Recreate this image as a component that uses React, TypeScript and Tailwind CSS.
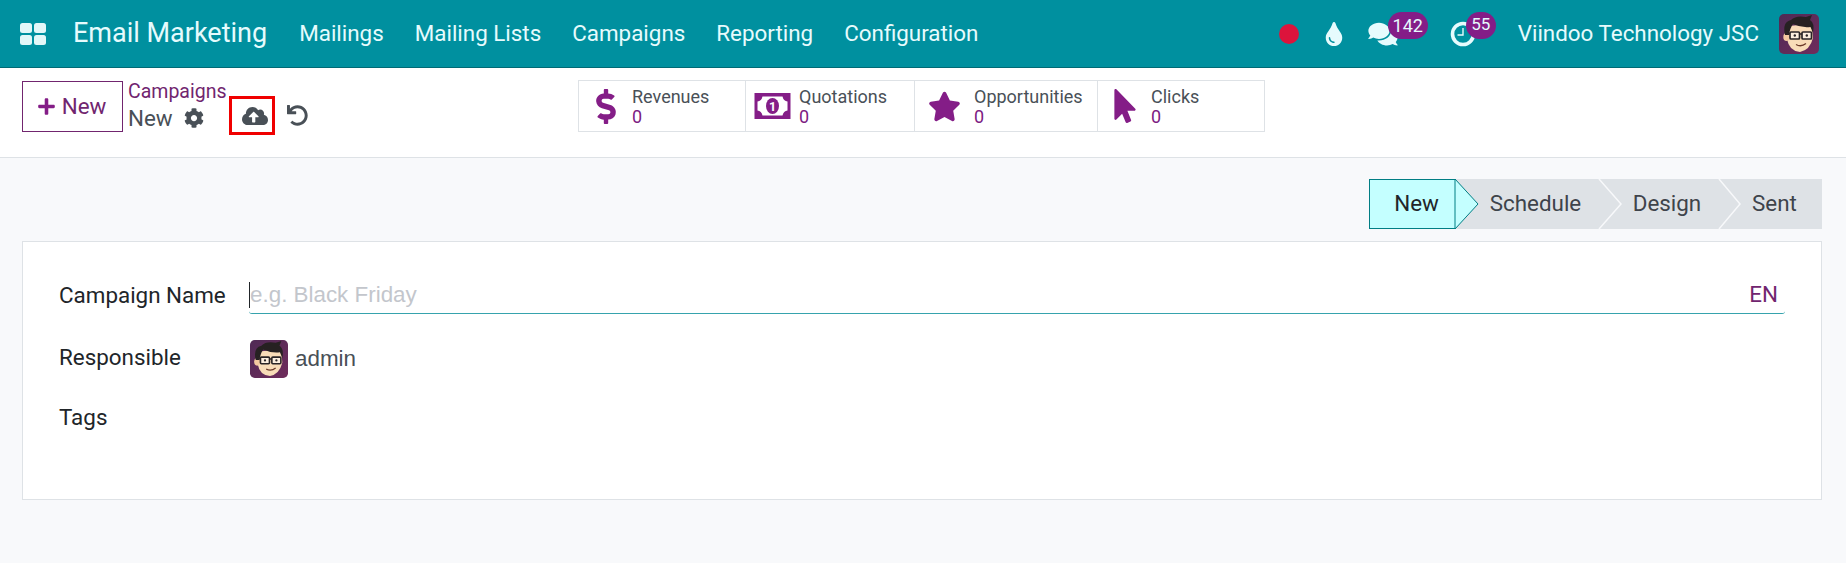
import React from "react";
import { FaDollarSign, FaStar, FaMousePointer, FaCog, FaCloudUploadAlt, FaUndo, FaPlus, FaTint, FaComments } from "react-icons/fa";

function Avatar({ className }: { className: string }) {
  return (
    <svg viewBox="0 0 40 40" className={className}>
      <defs>
        <clipPath id="av"><rect width="40" height="40" rx="5" /></clipPath>
        <linearGradient id="avbg" x1="0" y1="0" x2="1" y2="1">
          <stop offset="0" stopColor="#4f2a55" />
          <stop offset="1" stopColor="#6f2c5c" />
        </linearGradient>
      </defs>
      <g clipPath="url(#av)">
        <rect width="40" height="40" fill="url(#avbg)" />
        <path d="M8 20 L8 25 Q10 37 21 38 Q31 36 34 24 L33 10 L9 12 Z" fill="#f8dcb8" />
        <ellipse cx="7.5" cy="23" rx="3.2" ry="4" fill="#f3c9a0" />
        <path d="M6 21 Q3 8 12 6 Q17 1 27 3 L33 1 L31 6 Q36 9 34 19 L31.5 13 Q22 14 14 10 Q11 14 10 21 Z" fill="#262122" />
        <rect x="11" y="18" width="9.5" height="7" rx="1" fill="#fff" fillOpacity="0.55" stroke="#2a2526" strokeWidth="1.7" />
        <rect x="23" y="18" width="9.5" height="7" rx="1" fill="#fff" fillOpacity="0.55" stroke="#2a2526" strokeWidth="1.7" />
        <path d="M20.5 20 H23 M8 19.5 H11" stroke="#2a2526" strokeWidth="1.4" />
        <circle cx="15.8" cy="21.5" r="1.2" fill="#2a2526" />
        <circle cx="27.8" cy="21.5" r="1.2" fill="#2a2526" />
        <path d="M17 30.5 Q22 33.5 27 29.5" stroke="#6b3a2a" strokeWidth="1.3" fill="none" />
      </g>
    </svg>
  );
}

function MoneyIcon() {
  return (
    <svg viewBox="0 0 36 26" className="h-[26px] w-[37px]">
      <rect width="36" height="26" fill="#841d87" />
      <path d="M8 3.5 H28 Q29 8 33 8.5 V17.5 Q29 18 28 22.5 H8 Q7 18 3 17.5 V8.5 Q7 8 8 3.5 Z" fill="#fff" />
      <ellipse cx="18" cy="13" rx="6.5" ry="8" fill="#841d87" />
      <text x="18" y="17.5" textAnchor="middle" fontSize="12.5" fontWeight="700" fill="#fff" fontFamily="Roboto, sans-serif">1</text>
    </svg>
  );
}

function ClockIcon() {
  return (
    <svg viewBox="0 0 26 26" className="h-[26px] w-[26px]" fill="none" stroke="#e6fbfd">
      <circle cx="13" cy="13" r="10.5" strokeWidth="3.6" />
      <path d="M13 7 V14 H7.5" strokeWidth="1.4" />
    </svg>
  );
}

function Stat({ icon, label, width, iconBox }: { icon: React.ReactNode; label: string; width: string; iconBox: string }) {
  return (
    <div className={`flex h-full items-center border-r border-[#dee2e6] last:border-r-0 ${width}`}>
      <div className={`flex items-center justify-center ${iconBox}`}>{icon}</div>
      <div className="flex flex-col pt-[2px] text-[18px] leading-[20px]">
        <span className="text-[#495057]">{label}</span>
        <span className="text-[#7c2082]">0</span>
      </div>
    </div>
  );
}

function Step({ label, width, active, pad }: { label: string; width: string; active?: boolean; pad: string }) {
  return (
    <div className={`flex h-full items-center justify-center text-[22.4px] ${width} ${active ? "bg-[#c4ffff] border border-[#017e84] text-[#212529]" : "bg-[#dee2e6] text-[#3e444b]"}`}>
      <span className={pad}>{label}</span>
    </div>
  );
}

export default function App() {
  return (
    <div className="flex h-[563px] w-[1846px] flex-col overflow-hidden bg-[#f8f9fb] font-['Roboto',sans-serif]">
      <header className="flex h-[68px] shrink-0 items-center border-b border-[#006a75] bg-[#00909f] text-[#e6fbfd]">
        <svg viewBox="0 0 26 22" className="ml-[20px] h-[22px] w-[26px]" fill="#e3f7f8">
          <rect x="0" y="0" width="12" height="10" rx="2.5" />
          <rect x="14" y="0" width="12" height="10" rx="2.5" />
          <rect x="0" y="12" width="12" height="10" rx="2.5" />
          <rect x="14" y="12" width="12" height="10" rx="2.5" />
        </svg>
        <span className="ml-[27px] text-[27px]">Email Marketing</span>
        <nav className="ml-[32px] flex gap-[31px] text-[22.4px]">
          <span>Mailings</span>
          <span>Mailing Lists</span>
          <span>Campaigns</span>
          <span>Reporting</span>
          <span>Configuration</span>
        </nav>
        <div className="ml-auto flex items-center">
          <span className="h-[20px] w-[20px] rounded-full bg-[#dc143c]" />
          <FaTint className="ml-[26px] h-[24px] w-[18px]" />
          <span className="relative ml-[25px] flex">
            <FaComments className="h-[26px] w-[30px]" />
            <span className="absolute left-[20px] top-[-9px] flex h-[27px] w-[40px] items-center justify-center rounded-full bg-[#841d87] text-[18px]">142</span>
          </span>
          <span className="relative ml-[52px] flex">
            <ClockIcon />
            <span className="absolute left-[16px] top-[-9px] flex h-[27px] w-[30px] items-center justify-center rounded-full bg-[#841d87] text-[17px]">55</span>
          </span>
          <span className="ml-[42px] text-[22.4px]">Viindoo Technology JSC</span>
          <Avatar className="ml-[20px] mr-[27px] h-[40px] w-[40px]" />
        </div>
      </header>

      <section className="flex h-[90px] shrink-0 items-start border-b border-[#dee2e6] bg-white pl-[22px]">
        <button className="mt-[13px] flex h-[51px] w-[101px] items-center justify-center gap-[6px] border border-[#71256f] pr-[2px] text-[22.4px] text-[#71256f]">
          <FaPlus className="h-[19px] w-[19px] text-[#841d87]" />
          New
        </button>
        <div className="ml-[5px] mt-[12px] flex w-[101px] flex-col">
          <span className="text-[19.5px] leading-[24px] text-[#71256f]">Campaigns</span>
          <div className="mt-[1px] flex items-center text-[22.4px] leading-[26px] text-[#495057]">
            New
            <FaCog className="ml-[11px] h-[20px] w-[20px]" />
          </div>
        </div>
        <div className="mt-[28px] flex h-[39px] w-[46px] items-center justify-center border-[3px] border-[#f00000] pl-[5px]">
          <FaCloudUploadAlt className="h-[24px] w-[26px] text-[#495057]" />
        </div>
        <FaUndo className="ml-[12px] mt-[37px] h-[21px] w-[21px] text-[#495057]" />
        <div className="ml-[270px] mt-[12px] flex h-[52px] border border-[#dee2e6]">
          <Stat width="w-[167px]" iconBox="w-[53px]" label="Revenues" icon={<FaDollarSign className="h-[35px] w-[22px] text-[#841d87]" />} />
          <Stat width="w-[169px]" iconBox="w-[53px]" label="Quotations" icon={<MoneyIcon />} />
          <Stat width="w-[183px]" iconBox="w-[59px]" label="Opportunities" icon={<FaStar className="h-[33px] w-[33px] text-[#841d87]" />} />
          <Stat width="w-[166px]" iconBox="w-[53px]" label="Clicks" icon={<FaMousePointer className="h-[34px] w-[24px] text-[#841d87]" />} />
        </div>
      </section>

      <main className="flex flex-1 flex-col pl-[22px] pr-[24px] pt-[21px]">
        <div className="relative ml-auto flex h-[50px] w-[453px]">
          <Step label="New" width="w-[87px]" active pad="pl-[8px]" />
          <Step label="Schedule" width="w-[143px]" pad="pl-[16px]" />
          <Step label="Design" width="w-[120px]" pad="pl-[16px]" />
          <Step label="Sent" width="w-[103px]" pad="pl-[8px]" />
          <svg viewBox="0 0 453 50" className="absolute inset-0 h-[50px] w-[453px]" fill="none">
            <path d="M86 0 L109 25 L86 50 Z" fill="#c4ffff" stroke="#017e84" strokeWidth="1" />
            <path d="M230 0 L252 25 L230 50" stroke="#f8f9fb" strokeWidth="1.5" />
            <path d="M350 0 L371 25 L350 50" stroke="#f8f9fb" strokeWidth="1.5" />
          </svg>
        </div>
        <div className="mt-[12px] h-[259px] border border-[#dee2e6] bg-white pl-[36px] pr-[36px] pt-[38px] text-[22.4px] text-[#212529]">
          <div className="flex h-[34px] items-center">
            <span className="w-[190px] shrink-0 pb-[4px] leading-[30px]">Campaign Name</span>
            <div className="flex h-[33px] flex-1 items-center rounded-b-[3px] border-b border-[#36a3ad] pb-[3px] font-['Liberation_Sans',sans-serif]">
              <span className="border-l border-[#212529] text-[22.4px] leading-[26px] text-[#c3c6cc]">e.g. Black Friday</span>
              <span className="ml-auto mr-[7px] font-['Roboto',sans-serif] text-[22.4px] text-[#71256f]">EN</span>
            </div>
          </div>
          <div className="mt-[26px] flex h-[38px] items-center">
            <span className="w-[190px] shrink-0 pb-[3px]">Responsible</span>
            <Avatar className="h-[38px] w-[40px]" />
            <span className="ml-[6px] font-['Liberation_Sans',sans-serif] text-[#495057]">admin</span>
          </div>
          <div className="mt-[23px]">Tags</div>
        </div>
      </main>
    </div>
  );
}
